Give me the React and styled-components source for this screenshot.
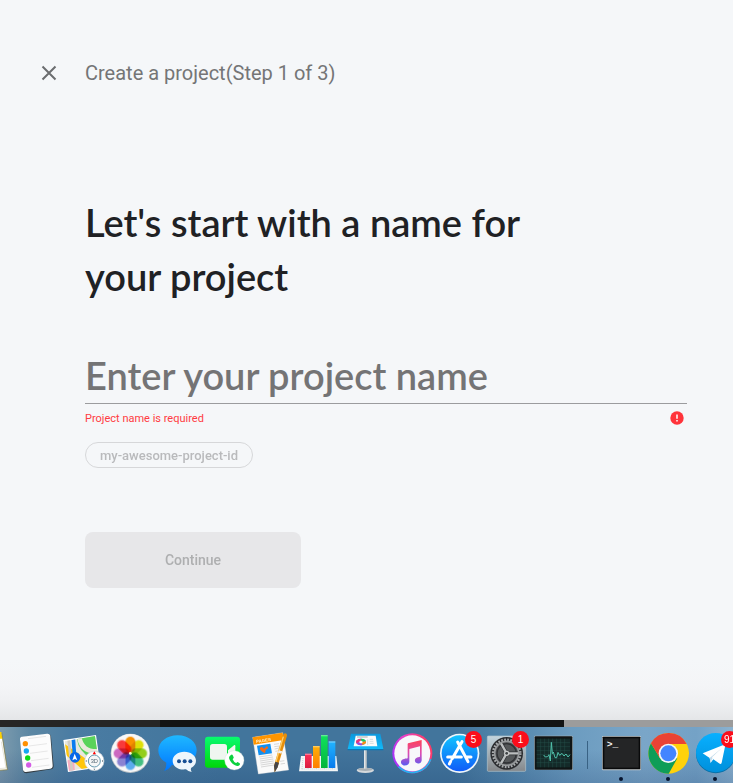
import React from "react";
import styled, { createGlobalStyle } from "styled-components";

const GlobalStyle = createGlobalStyle`
  *, *::before, *::after { box-sizing: border-box; }
  body { margin: 0; overflow: hidden; font-family: Roboto, "Liberation Sans", sans-serif; }
`;

const Screen = styled.div`
  display: flex;
  flex-direction: column;
  min-height: 100vh;
`;

const Wizard = styled.main`
  flex: 1;
  background: linear-gradient(to top, #e4e6e8 0, #eff0f2 18px, #f4f5f7 34px, #f5f7f9 60px);
`;

const Header = styled.header`
  display: flex;
  align-items: center;
  gap: 24px;
  padding: 61px 46px 0 37px;
`;

const CloseButton = styled.button`
  display: flex;
  padding: 0;
  border: 0;
  background: none;
  color: #6b6d6f;
`;

const StepTitle = styled.p`
  margin: 0;
  font-size: 20px;
  line-height: 24px;
  color: #747576;
`;

const Form = styled.form`
  display: flex;
  flex-direction: column;
  align-items: flex-start;
  padding: 110px 46px 64px 85px;
`;

const Heading = styled.h1`
  margin: 0 0 48px;
  max-width: 480px;
  font-family: Lato, Roboto, sans-serif;
  font-size: 38px;
  font-weight: 600;
  line-height: 54px;
  color: #202124;
`;

const NameInput = styled.input`
  width: 100%;
  height: 53px;
  padding: 0 0 4px;
  border: 0;
  border-bottom: 1px solid #9b9c9e;
  border-radius: 0;
  outline: 0;
  background: none;
  font-family: Lato, Roboto, sans-serif;
  font-size: 38px;
  font-weight: 600;
  color: #202124;
  &::placeholder { color: #747475; opacity: 1; }
`;

const ErrorRow = styled.div`
  display: flex;
  align-items: center;
  justify-content: space-between;
  width: 100%;
  height: 28px;
  padding-right: 3px;
  font-size: 11px;
  color: #ff3b42;
`;

const IdChip = styled.button`
  height: 26px;
  margin: 10px 0 64px;
  padding: 0 14px;
  border: 1px solid #d6d7d9;
  border-radius: 13px;
  background: none;
  font: 500 13px Roboto, sans-serif;
  color: #b9babc;
`;

const ContinueButton = styled.button`
  width: 216px;
  height: 56px;
  border: 0;
  border-radius: 8px;
  background: #e7e7e9;
  font: 500 14px Roboto, sans-serif;
  color: #aeafb0;
`;

const DesktopEdge = styled.div`
  display: grid;
  grid-template-columns: 160px 1fr 169px;
  height: 7px;
`;

const EdgePart = styled.span`
  background: ${(p) => p.$color};
`;

const Dock = styled.nav`
  display: flex;
  height: 56px;
  overflow: hidden;
  background:
    linear-gradient(to bottom, transparent 40%, rgba(20, 50, 100, 0.2)),
    linear-gradient(to right, #7d9bae 0, #5c87a3 4%, #4a7ca3 10%, #42759c 30%, #42759c 62%, #5588ad 70%, #6c9cc0 78%, #7aa6c8 88%, #74a2c6 95%, #8bb2d0 100%);
`;

const DockTrack = styled.div`
  display: flex;
  flex: none;
  margin-left: -34px;
`;

const DockItem = styled.button`
  position: relative;
  width: 47px;
  height: 56px;
  padding: 0;
  border: 0;
  background: none;
  svg { display: block; width: 100%; height: 100%; }
`;

const Badge = styled.span`
  position: absolute;
  top: 4px;
  right: 1px;
  min-width: 17px;
  height: 17px;
  padding: 0 3px;
  border-radius: 9px;
  background: #fb0d1b;
  color: #fff;
  font: 10px/17px "Liberation Sans", sans-serif;
  text-align: center;
`;

const Running = styled.i`
  position: absolute;
  left: 21px;
  bottom: 2px;
  width: 4px;
  height: 4px;
  border-radius: 50%;
  background: #06142e;
`;

const Separator = styled.span`
  width: 1px;
  height: 28px;
  margin: 14px 10px;
  background: #396284;
`;

const Petal = styled.rect`
  mix-blend-mode: multiply;
`;

const Notes = () => (
  <g>
    <path d="M-60 101 4 96 22 209-42 214Z" fill="#fff" />
    <path d="M-60 101 4 96 7 116-57 121Z" fill="#ffd400" />
    <path d="M4 125 18 204-44 210" fill="none" stroke="#d8d8c8" strokeWidth="2" />
    <path d="M5 97 22 209-42 214" fill="none" stroke="#8a7a30" strokeWidth="2" />
  </g>
);

const Reminders = () => (
  <g>
    <path d="M68 112 143 103Q152 102 153 110L161 198Q161 207 153 208L79 220Q71 220 69 213L61 120Z" fill="#333d43" />
    <path d="M66 110 141 101Q149 100 151 107L158 196Q159 205 151 206L78 216Q71 217 69 210L60 119Q59 111 66 110Z" fill="#fcfcfc" />
    <g stroke="#dcdcdc" strokeWidth="2">
      <path d="M84 116 138 109M87 138 141 131M90 160 143 153M93 182 146 175M96 202 148 195" />
    </g>
    <circle cx="76" cy="131" r="8" fill="#ff9000" />
    <circle cx="79" cy="153" r="8" fill="#14a7f4" />
    <circle cx="83" cy="174" r="8" fill="#0bd816" />
    <circle cx="86" cy="195" r="8" fill="#d35ce5" />
  </g>
);

const Maps = () => (
  <g>
    <clipPath id="map-sheet"><path d="M194 124 285 108 298 198 207 213Z" /></clipPath>
    <path d="M190 120 288 105 302 202 204 216Z" fill="#fff" />
    <g clipPath="url(#map-sheet)">
      <path d="M190 100h115v120H190Z" fill="#e9e7df" />
      <path d="M230 114 300 100 310 175 274 175Q236 156 230 114Z" fill="#5ad35a" />
      <path d="M190 184 222 176 225 220H200Z" fill="#f8abc0" />
      <path d="M190 129 268 184 260 220 190 158Z" fill="#ffc60b" />
      <path d="M238 112Q246 158 296 154" fill="none" stroke="#ebe9dc" strokeWidth="14" />
      <path d="M206 120 216 214" stroke="#d1ccc3" strokeWidth="8" />
      <path d="M220 116 224 172" stroke="#0a7cf0" strokeWidth="11" />
    </g>
    <circle cx="225" cy="172" r="16" fill="#0867e8" />
    <path d="M224 161 232 181 225 177 217 181Z" fill="#fff" />
    <circle cx="283" cy="183" r="29" fill="#fff" stroke="#c8d1d6" strokeWidth="2" />
    <circle cx="283" cy="183" r="18" fill="#f5f6f6" stroke="#6599af" strokeWidth="3" />
    <path d="M283 154 288 163H278Z" fill="#f00" />
    <path d="M260 180v6l-4-3ZM306 180v6l4-3ZM280 206h6l-3 4Z" fill="#52636e" />
    <text x="283" y="189" fontFamily="Liberation Sans" fontSize="17" fill="#526673" textAnchor="middle">3D</text>
  </g>
);

const petals = ["#ff9500", "#e6e60a", "#98d41a", "#45c485", "#5eb0f5", "#8e86d8", "#d26cc6", "#ff3b3b"];
const Photos = () => (
  <g>
    <circle cx="391" cy="160" r="59" fill="#b9c0c5" />
    <circle cx="391" cy="159" r="57" fill="#f8f8f8" />
    {petals.map((color, i) => (
      <Petal key={color} x="376" y="110" width="30" height="48" rx="15" fill={color} transform={`rotate(${i * 45} 391 160)`} />
    ))}
    <circle cx="391" cy="160" r="4" fill="#fff7cf" />
  </g>
);

const Messages = () => (
  <g>
    <linearGradient id="message-blue" x1="0" y1="0" x2="0" y2="1"><stop stopColor="#1fb8ff" /><stop offset="1" stopColor="#0076ff" /></linearGradient>
    <path d="M98 106C132 106 155 127 155 151S132 197 98 197Q89 197 81 195 73 207 58 213 65 203 64 188C50 181 40 168 40 151 40 126 65 106 98 106Z" fill="url(#message-blue)" />
    <path d="M118 155C138 155 153 167 153 182Q153 195 138 204 136 210 140 216 129 214 123 208C99 211 83 199 83 182 83 167 98 155 118 155Z" fill="#eef6fc" />
    <g fill="#174f94"><circle cx="102" cy="184" r="6" /><circle cx="119" cy="184" r="6" /><circle cx="136" cy="184" r="6" /></g>
  </g>
);

const FaceTime = () => (
  <g>
    <linearGradient id="facetime-green" x1="0" y1="0" x2="0" y2="1"><stop stopColor="#08fa70" /><stop offset="1" stopColor="#00d60a" /></linearGradient>
    <rect x="180" y="110" width="105" height="93" rx="9" fill="url(#facetime-green)" />
    <rect x="195" y="132" width="51" height="47" rx="8" fill="#eff6f0" />
    <path d="M249 151 268 135Q271 134 271 139V176L249 164Z" fill="#eff6f0" />
    <circle cx="268" cy="181" r="29" fill="#fff" stroke="#c9ddce" />
    <path d="M255 167 259 164Q262 163 264 167L266 172Q267 174 264 176L263 178Q266 186 273 189L275 188Q277 185 279 187L284 190Q286 192 284 195 279 201 270 196 256 189 252 174 252 170 255 167Z" fill="#0bd13e" />
  </g>
);

const Pages = () => (
  <g>
    <path d="M323 112 413 98 431 210 340 222Z" fill="#fafafa" stroke="#d9d9d9" />
    <path d="M323 112 413 98 416 120 326 134Z" fill="#ff9500" />
    <text x="334" y="129" transform="rotate(-8 334 129)" fontFamily="Liberation Sans" fontWeight="700" fontSize="13" fill="#fff2d2">PAGES</text>
    <path d="M336 137 376 131 381 160 341 166Z" fill="#1090f2" />
    <path d="M344 144 351 140 357 146 366 138 370 144 362 150 360 160 353 156 346 150Z" fill="#f56917" />
    <path d="M342 171 382 165M344 177 384 171M345 183 385 177M346 189 386 183M347 195 387 189M348 201 387 195M387 133 402 131M388 140 403 138M389 147 403 144M391 154 404 152M405 184 418 182M407 192 420 190" stroke="#c4c4c4" strokeWidth="2" />
    <path d="M413 107Q416 100 421 100 427 101 426 107L398 200 389 217 387 197Z" fill="#e58e0c" />
    <path d="M415 110 392 188" stroke="#ffd06b" strokeWidth="4" />
    <path d="M391 185 402 188 398 202 389 217 387 198Z" fill="#464549" />
    <path d="M401 151 412 154 409 161 399 158Z" fill="#eee" />
  </g>
);

const bars = [
  { x: 45, y: 161, top: "#ff3159", bottom: "#d91d40" },
  { x: 69, y: 138, top: "#ffb008", bottom: "#ff7e00" },
  { x: 93, y: 105, top: "#0fe35c", bottom: "#04b43c" },
  { x: 116, y: 124, top: "#22b5ff", bottom: "#087bed" },
];

const Numbers = () => (
  <g>
    <path d="M33 168H139L144 214H27Z" fill="#f4f6f6" />
    <path d="M39 174 36 207M54 174V207M79 174V207M103 174V207M127 174V207M35 207H139" stroke="#b7c3c8" strokeWidth="2" strokeDasharray="3 3" />
    {bars.map(({ x, y, top, bottom }) => (
      <g key={x}>
        <linearGradient id={`bar-${x}`} x1="0" y1="0" x2="0" y2="1"><stop stopColor={top} /><stop offset="1" stopColor={bottom} /></linearGradient>
        <rect x={x} y={y} width="20" height={204 - y} fill={`url(#bar-${x})`} />
        <rect x={x} y={y} width="20" height="4" fill="#fff" fillOpacity=".35" />
      </g>
    ))}
  </g>
);

const Keynote = () => (
  <g>
    <linearGradient id="keynote-blue" x1="0" y1="0" x2="0" y2="1"><stop stopColor="#0d97dc" /><stop offset="1" stopColor="#10bafa" /></linearGradient>
    <ellipse cx="226" cy="211" rx="26" ry="8" fill="#d5d9dc" />
    <ellipse cx="226" cy="208" rx="22" ry="5" fill="#a6afb5" />
    <path d="M222 148h8v58h-8Z" fill="#e4e7e9" />
    <path d="M228 148v58" stroke="#8b989f" strokeWidth="2" />
    <path d="M183 101H271L280 147H173Z" fill="url(#keynote-blue)" />
    <path d="M173 147H280V151H173Z" fill="#0879b6" />
    <path d="M197 107H257L262 139H191Z" fill="#fafafa" />
    <path d="M201 111H233" stroke="#aaa" strokeWidth="3" />
    <ellipse cx="213" cy="126" rx="15" ry="10" fill="#13bfec" />
    <path d="M213 126V116A15 10 0 0 0 199 130Z" fill="#ee337a" />
    <path d="M213 126 199 130A15 10 0 0 0 218 135Z" fill="#9f48db" />
    <path d="M213 126V116A15 10 0 0 1 228 124Z" fill="#21c65d" />
    <path d="M213 126 228 124A15 10 0 0 1 218 135Z" fill="#ff8a13" />
    <ellipse cx="213" cy="126" rx="5" ry="4" fill="#fafafa" />
    <path d="M233 118V135M239 118H249M239 124H250M239 130H251" stroke="#d3dcdf" strokeWidth="3" />
  </g>
);

const Music = () => (
  <g>
    <linearGradient id="music-ring" x1="0" y1=".7" x2="1" y2=".3"><stop stopColor="#a030ff" /><stop offset=".45" stopColor="#e83fc8" /><stop offset="1" stopColor="#ff3b5c" /></linearGradient>
    <linearGradient id="music-note" x1="0" y1="0" x2="0" y2="1"><stop stopColor="#ff4357" /><stop offset=".55" stopColor="#d94cb7" /><stop offset="1" stopColor="#5c5bf1" /></linearGradient>
    <circle cx="367" cy="160" r="60" fill="url(#music-ring)" />
    <path d="M326 200A58 58 0 0 0 422 178" fill="none" stroke="#23b4ef" strokeWidth="5" />
    <circle cx="367" cy="160" r="54" fill="#f8f8fa" />
    <path d="M354 130 395 120V177C397 194 377 193 375 184 373 174 383 171 390 170V139L358 147V184C359 200 335 200 333 188 332 178 344 176 353 175V132Z" fill="url(#music-note)" />
  </g>
);

const AppStore = () => (
  <g>
    <linearGradient id="store-blue" x1="0" y1="0" x2="0" y2="1"><stop stopColor="#12c4ff" /><stop offset="1" stopColor="#0f5cf8" /></linearGradient>
    <circle cx="74" cy="160" r="59" fill="#f0f6fa" />
    <circle cx="74" cy="160" r="54" fill="url(#store-blue)" />
    <path d="M81 125 51 177M68 126 99 185M38 171H79M94 171H108M47 184 43 192" fill="none" stroke="#fff" strokeWidth="9" strokeLinecap="round" />
  </g>
);

const Preferences = () => (
  <g>
    <linearGradient id="pref-metal" x1="0" y1="0" x2="0" y2="1"><stop stopColor="#c3d5de" /><stop offset="1" stopColor="#84878a" /></linearGradient>
    <rect x="157" y="108" width="115" height="106" rx="3" fill="url(#pref-metal)" stroke="#b4c4cc" strokeWidth="2" />
    <circle cx="215" cy="160" r="49" fill="#2b2d30" />
    <circle cx="215" cy="160" r="40" fill="none" stroke="#a9acae" strokeWidth="9" strokeDasharray="5 4" />
    <circle cx="215" cy="160" r="36" fill="#4a4c4f" stroke="#96999b" strokeWidth="5" />
    <circle cx="215" cy="160" r="29" fill="#55585a" stroke="#303235" strokeWidth="4" />
    <path d="M215 160H248M215 160 199 131M215 160 199 189" stroke="#303235" strokeWidth="11" />
    <path d="M215 160H249M215 160 198 130M215 160 198 190" stroke="#bcbfc0" strokeWidth="7" />
    <circle cx="215" cy="160" r="8" fill="#c7caca" />
    <circle cx="215" cy="160" r="4" fill="#3d4143" />
  </g>
);

const Activity = () => (
  <g>
    <rect x="297" y="107" width="117" height="103" rx="4" fill="#a4b4bd" />
    <rect x="299" y="109" width="113" height="100" rx="3" fill="#101516" />
    <rect x="305" y="116" width="100" height="86" fill="#142a29" />
    <path d="M317 116V202M329 116V202M341 116V202M353 116V202M365 116V202M377 116V202M389 116V202M305 128H405M305 140H405M305 152H405M305 164H405M305 176H405M305 188H405" stroke="#24504a" strokeWidth="1.5" />
    <path d="M326 165 331 171 338 170 342 164 346 183 349 127 352 161 355 156 360 173 365 173 369 157 374 166 381 160 387 168 393 162 399 171 405 164" fill="none" stroke="#4fbfa9" strokeWidth="3" />
  </g>
);

const Terminal = () => (
  <g>
    <rect x="57" y="108" width="117" height="103" rx="3" fill="#c5cbce" />
    <rect x="59" y="110" width="113" height="98" rx="2" fill="#090a0b" />
    <rect x="64" y="115" width="103" height="88" fill="#242526" />
    <text x="71" y="141" fontFamily="Liberation Mono" fontWeight="700" fontSize="29" fill="#f4f4f4">&gt;_</text>
  </g>
);

const Chrome = () => (
  <g>
    <circle cx="257" cy="160" r="61" fill="#ffd20a" />
    <path d="M204 130A61 61 0 0 0 257 221L283 175 231 175Z" fill="#0f9d58" />
    <path d="M204 130A61 61 0 0 1 311 132H257L231 175Z" fill="#e94335" />
    <circle cx="256" cy="160" r="29" fill="#f5f6f6" />
    <circle cx="256" cy="160" r="24" fill="#4285ff" />
  </g>
);

const Telegram = () => (
  <g>
    <linearGradient id="telegram-blue" x1="0" y1="0" x2="0" y2="1"><stop stopColor="#08b0ff" /><stop offset="1" stopColor="#0090dc" /></linearGradient>
    <circle cx="398" cy="161" r="59" fill="#0870a8" />
    <circle cx="398" cy="158" r="59" fill="url(#telegram-blue)" />
    <path d="M359 160 421 135Q428 133 426 140L416 188Q414 195 408 190L391 178 383 188 380 174Z" fill="#fff" />
    <path d="M380 174 416 145 387 177 383 190Z" fill="#c3dceb" />
    <path d="M387 172 416 145 391 178Z" fill="#fff" />
  </g>
);

const apps = [
  { name: "Notes", Icon: Notes, x: -102 },
  { name: "Reminders", Icon: Reminders, x: 39 },
  { name: "Maps", Icon: Maps, x: 180 },
  { name: "Photos", Icon: Photos, x: 321 },
  { name: "Messages", Icon: Messages, x: 27 },
  { name: "FaceTime", Icon: FaceTime, x: 168 },
  { name: "Pages", Icon: Pages, x: 309 },
  { name: "Numbers", Icon: Numbers, x: 15 },
  { name: "Keynote", Icon: Keynote, x: 156 },
  { name: "iTunes", Icon: Music, x: 297 },
  { name: "App Store", Icon: AppStore, x: 3, badge: "5" },
  { name: "System Preferences", Icon: Preferences, x: 144, badge: "1" },
  { name: "Activity Monitor", Icon: Activity, x: 285 },
];

const openApps = [
  { name: "Terminal", Icon: Terminal, x: 45, running: true },
  { name: "Chrome", Icon: Chrome, x: 186, running: true },
  { name: "Telegram", Icon: Telegram, x: 327, running: true, badge: "91" },
];

const DockApp = ({ name, Icon, x, badge, running }) => (
  <DockItem type="button" aria-label={name}>
    <svg viewBox={`${x} 81 141 168`} aria-hidden="true"><Icon /></svg>
    {badge && <Badge>{badge}</Badge>}
    {running && <Running />}
  </DockItem>
);

export default function App() {
  return (
    <>
      <GlobalStyle />
      <Screen>
        <Wizard>
          <Header>
            <CloseButton type="button" aria-label="Close">
              <svg width="24" height="24" viewBox="0 0 24 24" fill="none" stroke="currentColor" strokeWidth="2">
                <path d="M5.5 5.5 18.5 18.5M18.5 5.5 5.5 18.5" />
              </svg>
            </CloseButton>
            <StepTitle>Create a project(Step 1 of 3)</StepTitle>
          </Header>
          <Form onSubmit={(e) => e.preventDefault()}>
            <Heading id="name-heading">Let's start with a name for your project</Heading>
            <NameInput type="text" placeholder="Enter your project name" aria-labelledby="name-heading" aria-describedby="name-error" />
            <ErrorRow id="name-error">
              Project name is required
              <svg width="14" height="14" viewBox="0 0 14 14" aria-hidden="true">
                <circle cx="7" cy="7" r="6.7" fill="#ff343b" />
                <path d="M7 3.5V7.8M7 9V10.6" stroke="#fff" strokeWidth="1.5" />
              </svg>
            </ErrorRow>
            <IdChip type="button">my-awesome-project-id</IdChip>
            <ContinueButton type="submit" disabled>Continue</ContinueButton>
          </Form>
        </Wizard>
        <DesktopEdge>
          <EdgePart $color="#262626" />
          <EdgePart $color="#131414" />
          <EdgePart $color="#9c9c9c" />
        </DesktopEdge>
        <Dock aria-label="Dock">
          <DockTrack>
            {apps.map((app) => <DockApp key={app.name} {...app} />)}
            <Separator />
            {openApps.map((app) => <DockApp key={app.name} {...app} />)}
          </DockTrack>
        </Dock>
      </Screen>
    </>
  );
}
